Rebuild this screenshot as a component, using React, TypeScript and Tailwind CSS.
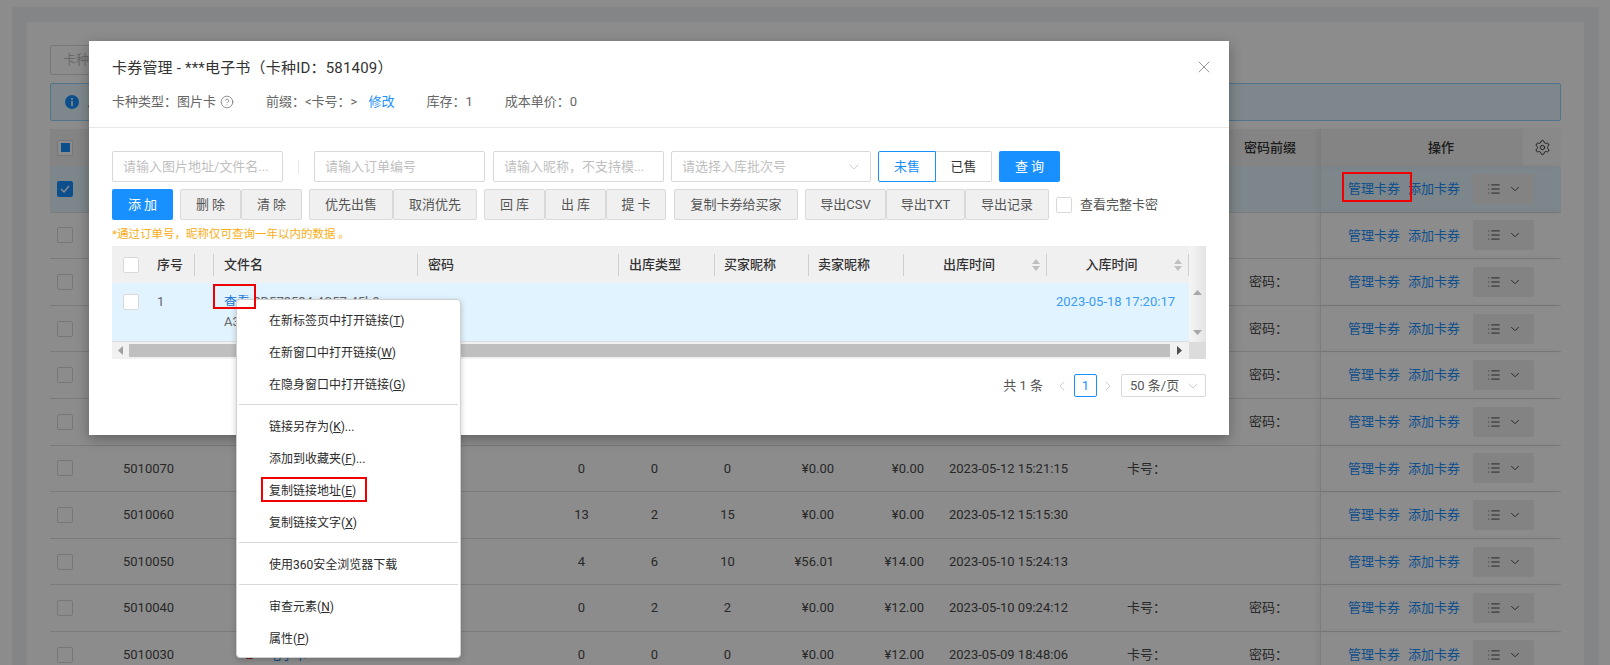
import React from "react";
import { ChevronDown, ChevronLeft, ChevronRight, CircleHelp, List, Settings, X } from "lucide-react";

type Row = { id?: string; n?: string[]; p?: string[]; date?: string; card?: boolean; pwd?: boolean; selected?: boolean; named?: boolean };

const rows: Row[] = [
  { selected: true },
  {},
  { pwd: true },
  { pwd: true },
  { pwd: true },
  { pwd: true },
  { id: "5010070", n: ["0", "0", "0"], p: ["¥0.00", "¥0.00"], date: "2023-05-12 15:21:15", card: true },
  { id: "5010060", n: ["13", "2", "15"], p: ["¥0.00", "¥0.00"], date: "2023-05-12 15:15:30" },
  { id: "5010050", n: ["4", "6", "10"], p: ["¥56.01", "¥14.00"], date: "2023-05-10 15:24:13" },
  { id: "5010040", n: ["0", "2", "2"], p: ["¥0.00", "¥12.00"], date: "2023-05-10 09:24:12", card: true, pwd: true },
  { id: "5010030", named: true, n: ["0", "0", "0"], p: ["¥0.00", "¥12.00"], date: "2023-05-09 18:48:06", card: true, pwd: true },
];

function Box({ className = "" }: { className?: string }) {
  return <span className={`block w-[16px] h-[16px] rounded-[2px] border border-[#d9d9d9] bg-white shrink-0 ${className}`} />;
}

function PageRow({ r }: { r: Row }) {
  return (
    <div className={`flex items-center h-[46.6px] border-b border-[#e0e0e0] text-[13px] text-[#4a4a4a] ${r.selected ? "bg-[#e3f4fc]" : ""}`}>
      <div className="w-[73px] pl-[7px] shrink-0">
        {r.selected ? (
          <span className="flex w-[16px] h-[16px] rounded-[2px] bg-[#1890ff] items-center justify-center">
            <svg width="10" height="8" viewBox="0 0 10 8" fill="none"><path d="M1 4l3 3 5-6" stroke="#fff" strokeWidth="1.4" /></svg>
          </span>
        ) : (
          <Box />
        )}
      </div>
      <div className="w-[120px] shrink-0">{r.id}</div>
      <div className="w-[302px] shrink-0 flex items-center gap-[15px] pl-[3px]">
        {r.named && (
          <>
            <span className="w-[7px] h-[9px] bg-[#d83030] rounded-[1px]" />
            <span className="text-[#1890ff]">电子卡</span>
          </>
        )}
      </div>
      {[0, 1, 2].map((i) => (
        <div key={i} className="w-[73px] shrink-0 text-center">{r.n?.[i]}</div>
      ))}
      <div className="w-[70px] shrink-0 text-right">{r.p?.[0]}</div>
      <div className="w-[90px] shrink-0 text-right">{r.p?.[1]}</div>
      <div className="w-[203px] shrink-0 pl-[25px]">{r.date}</div>
      <div className="w-[122px] shrink-0">{r.card ? "卡号：" : ""}</div>
      <div className="w-[71px] shrink-0">{r.pwd ? "密码：" : ""}</div>
      <div className="h-full flex-1 flex items-center pl-[27px] border-l border-[#e4e4e4] shadow-[-3px_0_5px_rgba(0,0,0,0.05)]">
        <span className="text-[#1890ff]">管理卡券</span>
        <span className="text-[#1890ff] ml-[8px]">添加卡券</span>
        <span className="ml-[13px] w-[61px] h-[30px] rounded-[2px] bg-[#efefef] flex items-center justify-center gap-[7px] pl-[2px] text-[#333]">
          <List size={14} strokeWidth={1.5} />
          <ChevronDown size={14} strokeWidth={1.5} />
        </span>
      </div>
    </div>
  );
}

function Btn({ w, children, primary }: { w: number; children: React.ReactNode; primary?: boolean }) {
  return (
    <button
      style={{ width: w }}
      className={`h-[31px] rounded-[2px] text-[13px] shrink-0 ${primary ? "bg-[#1890ff] text-white" : "bg-[#f0f0f0] border border-[#d9d9d9] text-[#555]"}`}
    >
      {children}
    </button>
  );
}

function Input({ w, text, arrow }: { w: number; text: string; arrow?: boolean }) {
  return (
    <div style={{ width: w }} className="h-[31px] border border-[#d9d9d9] rounded-[2px] flex items-center pl-[10px] pr-[8px] text-[13px] text-[#bfbfbf] shrink-0 whitespace-nowrap">
      <span className="flex-1 overflow-hidden">{text}</span>
      {arrow && <ChevronDown size={16} strokeWidth={1.2} className="text-[#bfbfbf]" />}
    </div>
  );
}

function Sep() {
  return <i className="block w-px h-[22px] bg-[#cfcfcf] shrink-0" />;
}

function Sort() {
  return (
    <svg width="10" height="14" viewBox="0 0 10 14" className="shrink-0 mr-[5px]" fill="#bfbfbf">
      <path d="M5 1l4 5H1zM5 13L1 8h8z" />
    </svg>
  );
}

function HeadCell({ w, children, center, sort, noSep, pl = 10 }: { w: number; children?: React.ReactNode; center?: boolean; sort?: boolean; noSep?: boolean; pl?: number }) {
  return (
    <div style={{ width: w }} className="flex items-center h-full shrink-0">
      <div style={{ paddingLeft: pl }} className={`flex-1 whitespace-nowrap ${center ? "text-center" : ""}`}>{children}</div>
      {sort && <Sort />}
      {!noSep && <Sep />}
    </div>
  );
}

function MenuItem({ text, k, tail }: { text: string; k: string; tail?: string }) {
  return (
    <div className="h-[32px] flex items-center pl-[32px] text-[12px] text-[#2b2b2b]">
      {text}(<span className="underline">{k}</span>){tail}
    </div>
  );
}

function MenuSep() {
  return <div className="mt-[3px] mb-[6px] mx-[2px] h-px bg-[#d8d8d8]" />;
}

export default function App() {
  return (
    <div className="relative w-[1610px] h-[665px] overflow-hidden bg-white pl-[12px] pt-[7px] pr-[11px] font-[Roboto,'Noto_Sans_CJK_SC',sans-serif]">
      {/* page beneath the mask */}
      <div className="h-[700px] bg-[#f0f2f5] px-[15px] pt-[15px]">
        <div className="h-full bg-white pl-[23px] pr-[23px] pt-[23px]">
          <div className="flex gap-[8px]">
            <div className="w-[220px] h-[30px] border border-[#d9d9d9] rounded-[2px] pl-[12px] flex items-center text-[13px] text-[#bfbfbf]">卡种</div>
          </div>
          <div className="mt-[8px] h-[38px] border border-[#91d5ff] bg-[#e6f7ff] rounded-[2px] flex items-center pl-[14px] gap-[8px] text-[13px] text-[#555]">
            <svg width="14" height="14" viewBox="0 0 14 14"><circle cx="7" cy="7" r="7" fill="#1890ff" /><rect x="6.2" y="6" width="1.6" height="5" fill="#fff" /><rect x="6.2" y="3" width="1.6" height="1.8" fill="#fff" /></svg>
            <span>人</span>
          </div>
          <div className="mt-[8px] h-[37px] flex items-center bg-[#f0f0f0] text-[13px] font-medium text-[#333]">
            <div className="w-[1270px] shrink-0 pl-[7px] flex items-center h-full">
              <span className="flex items-center justify-center w-[16px] h-[16px] rounded-[2px] border border-[#d9d9d9] bg-white">
                <span className="w-[9px] h-[9px] bg-[#1890ff]" />
              </span>
              <span className="ml-auto w-[100px] text-center">密码前缀</span>
            </div>
            <div className="h-full flex-1 flex items-center border-l border-[#e4e4e4] shadow-[-3px_0_5px_rgba(0,0,0,0.05)]">
              <span className="flex-1 text-center pl-[38px]">操作</span>
              <span className="w-[38px] h-full bg-[#fafafa] flex items-center justify-center">
                <Settings size={17} strokeWidth={1.4} />
              </span>
            </div>
          </div>
          {rows.map((r, i) => (
            <PageRow key={i} r={r} />
          ))}
        </div>
      </div>

      {/* mask */}
      <div className="absolute inset-0 bg-black/45" />

      {/* modal */}
      <div className="absolute left-[89px] top-[41px] w-[1140px] h-[394px] bg-white shadow-[0_4px_12px_rgba(0,0,0,0.3)]">
        <div className="h-[87px] border-b border-[#e8e8e8] px-[23px] pt-[17px] relative">
          <div className="text-[15px] leading-[20px] tracking-[0.2px] text-[#333]">卡券管理 - ***电子书（卡种ID：581409）</div>
          <div className="mt-[14px] flex items-center text-[13px] leading-[20px] text-[#666]">
            <span>卡种类型：图片卡</span>
            <CircleHelp size={14} strokeWidth={1.2} className="ml-[4px]" />
            <span className="ml-[32px]">前缀：&lt;卡号：&gt;</span>
            <span className="ml-[11px] text-[#1890ff]">修改</span>
            <span className="ml-[32px]">库存：1</span>
            <span className="ml-[32px]">成本单价：0</span>
          </div>
          <X size={20} strokeWidth={1.1} className="absolute right-[15px] top-[16px] text-[#8c8c8c]" />
        </div>
        <div className="px-[23px] pt-[23px]">
          <div className="flex items-center">
            <Input w={171} text="请输入图片地址/文件名..." />
            <i className="block w-px h-[14px] bg-[#e8e8e8] ml-[15px] mr-[15px]" />
            <Input w={171} text="请输入订单编号" />
            <span className="w-[8px]" />
            <Input w={171} text="请输入昵称，不支持模..." />
            <span className="w-[7px]" />
            <Input w={200} text="请选择入库批次号" arrow />
            <span className="w-[7px]" />
            <div className="w-[58px] h-[31px] border border-[#1890ff] rounded-l-[2px] text-[#1890ff] text-[13px] flex items-center justify-center">未售</div>
            <div className="w-[56px] h-[31px] border border-l-0 border-[#d9d9d9] rounded-r-[2px] text-[#333] text-[13px] flex items-center justify-center">已售</div>
            <span className="w-[7px]" />
            <Btn w={61} primary>查 询</Btn>
          </div>
          <div className="mt-[7px] flex items-center">
            <Btn w={61} primary>添 加</Btn>
            <span className="w-[7px]" />
            <Btn w={61}>删 除</Btn>
            <Btn w={61}>清 除</Btn>
            <span className="w-[7px]" />
            <Btn w={84}>优先出售</Btn>
            <Btn w={84}>取消优先</Btn>
            <span className="w-[7px]" />
            <Btn w={61}>回 库</Btn>
            <Btn w={61}>出 库</Btn>
            <Btn w={60}>提 卡</Btn>
            <span className="w-[8px]" />
            <Btn w={124}>复制卡券给买家</Btn>
            <span className="w-[7px]" />
            <Btn w={81}>导出CSV</Btn>
            <Btn w={79}>导出TXT</Btn>
            <Btn w={84}>导出记录</Btn>
            <Box className="ml-[7px]" />
            <span className="ml-[8px] text-[13px] text-[#555]">查看完整卡密</span>
          </div>
          <div className="mt-[5px] h-[18px] leading-[18px] text-[11.5px] text-[#faad14]">*通过订单号，昵称仅可查询一年以内的数据 。</div>

          <div className="mt-[3px] w-[1094px]">
            <div className="h-[37px] bg-[#f0f0f0] flex items-center text-[13px] font-medium text-[#333]">
              <div className="w-[36px] pl-[11px] shrink-0"><Box /></div>
              <HeadCell w={47} pl={9}>序号</HeadCell>
              <HeadCell w={19} />
              <HeadCell w={204}>文件名</HeadCell>
              <HeadCell w={201}>密码</HeadCell>
              <HeadCell w={96}>出库类型</HeadCell>
              <HeadCell w={94} pl={9}>买家昵称</HeadCell>
              <HeadCell w={95} pl={9}>卖家昵称</HeadCell>
              <HeadCell w={143} center sort pl={3}>出库时间</HeadCell>
              <HeadCell w={142} center sort pl={3}>入库时间</HeadCell>
              <div className="flex-1 h-full bg-gradient-to-r from-[#f5f5f5] to-[#e4e4e4]" />
            </div>
            <div className="h-[59px] flex">
              <div className="w-[1077px] bg-[#e1f3fe] border-b border-[#dcdcdc] flex text-[13px] leading-[20px] text-[#666]">
                <div className="w-[36px] pl-[11px] pt-[11px] shrink-0"><Box /></div>
                <div className="w-[66px] pl-[9px] pt-[9px] shrink-0">1</div>
                <div className="w-[500px] pl-[10px] pt-[9px] shrink-0 whitespace-nowrap">
                  <div><span className="text-[#1677d8] underline">查看</span> 8D573584-4C57-45b9-</div>
                  <div>A3</div>
                </div>
                <div className="flex-1 pt-[9px] text-right pr-[14px] text-[#3b9bf5]">2023-05-18 17:20:17</div>
              </div>
              <div className="flex-1 bg-gradient-to-r from-[#f5f5f5] to-[#e4e4e4] flex flex-col items-center justify-between py-[7px]">
                <svg width="9" height="5" viewBox="0 0 9 5" fill="#a8a8a8"><path d="M4.5 0L9 5H0z" /></svg>
                <svg width="9" height="5" viewBox="0 0 9 5" fill="#a8a8a8"><path d="M4.5 5L0 0h9z" /></svg>
              </div>
            </div>
            <div className="h-[17px] bg-[#f1f1f1] flex items-center">
              <div className="w-[17px] flex justify-center">
                <svg width="5" height="9" viewBox="0 0 5 9" fill="#a0a0a0"><path d="M0 4.5L5 0v9z" /></svg>
              </div>
              <div className="w-[1041px] h-[13px] bg-[#bfbfbf]" />
              <div className="w-[19px] flex justify-center">
                <svg width="5" height="9" viewBox="0 0 5 9" fill="#505050"><path d="M5 4.5L0 0v9z" /></svg>
              </div>
              <div className="flex-1 h-full bg-[#dcdcdc]" />
            </div>
            <div className="mt-[15px] h-[23px] flex items-center justify-end text-[13px] text-[#555]">
              <span>共 1 条</span>
              <ChevronLeft size={16} strokeWidth={1.2} className="ml-[11px] text-[#bfbfbf]" />
              <span className="ml-[4px] w-[23px] h-[23px] border border-[#1890ff] rounded-[2px] text-[#1890ff] flex items-center justify-center">1</span>
              <ChevronRight size={16} strokeWidth={1.2} className="ml-[3px] text-[#bfbfbf]" />
              <span className="ml-[5px] w-[85px] h-[23px] border border-[#d9d9d9] rounded-[2px] pl-[8px] pr-[4px] flex items-center justify-between">
                50 条/页
                <ChevronDown size={16} strokeWidth={1.2} className="text-[#bfbfbf]" />
              </span>
            </div>
          </div>
        </div>
      </div>

      {/* context menu */}
      <div className="absolute left-[236px] top-[299px] w-[225px] h-[359px] bg-white border border-[#d0d0d0] rounded-[4px] shadow-[0_2px_6px_rgba(0,0,0,0.2)] pt-[5px]">
        <MenuItem text="在新标签页中打开链接" k="T" />
        <MenuItem text="在新窗口中打开链接" k="W" />
        <MenuItem text="在隐身窗口中打开链接" k="G" />
        <MenuSep />
        <MenuItem text="链接另存为" k="K" tail="..." />
        <MenuItem text="添加到收藏夹" k="F" tail="..." />
        <MenuItem text="复制链接地址" k="E" />
        <MenuItem text="复制链接文字" k="X" />
        <MenuSep />
        <div className="h-[32px] flex items-center pl-[32px] text-[12px] text-[#2b2b2b]">使用360安全浏览器下载</div>
        <MenuSep />
        <MenuItem text="审查元素" k="N" />
        <MenuItem text="属性" k="P" />
      </div>

      {/* red annotation boxes */}
      <div className="absolute left-[213px] top-[284px] w-[43px] h-[25px] border-2 border-[#f00000]" />
      <div className="absolute left-[261px] top-[477px] w-[106px] h-[25px] border-2 border-[#f00000]" />
      <div className="absolute left-[1342px] top-[172px] w-[70px] h-[30px] border-2 border-[#f00000]" />
    </div>
  );
}
